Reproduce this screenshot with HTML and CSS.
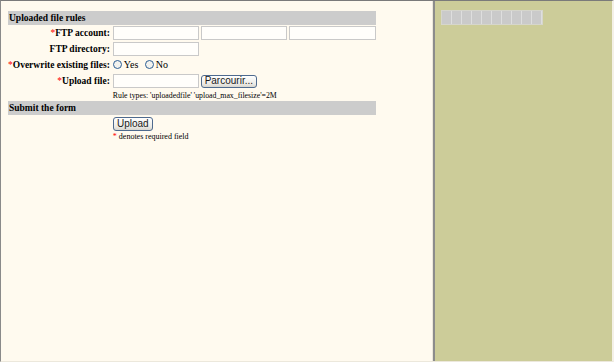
FILE: index.html
```html
<!DOCTYPE html>
<html lang="en">
<head>
    <meta charset="UTF-8">
    <title>Upload</title>
    <link rel="stylesheet" href="styles.css">
</head>
<body>
<div class="frames">
    <!--表单-->
    <div class="left">
        <table class="form-table">
            <tr class="header">
                <td colspan="2">Uploaded file rules</td>
            </tr>
            <tr>
                <td class="label"><span class="req">*</span>FTP account:</td>
                <td class="field">
                    <input type="text" class="txt"><input type="text" class="txt"><input type="text" class="txt last">
                </td>
            </tr>
            <tr>
                <td class="label">FTP directory:</td>
                <td class="field"><input type="text" class="txt"></td>
            </tr>
            <tr>
                <td class="label"><span class="req">*</span>Overwrite existing files:</td>
                <td class="field">
                    <label class="radio"><span class="dot"></span>Yes</label>
                    <label class="radio"><span class="dot"></span>No</label>
                </td>
            </tr>
            <tr>
                <td class="label"><span class="req">*</span>Upload file:</td>
                <td class="field">
                    <input type="text" class="txt"><button class="btn browse">Parcourir...</button>
                </td>
            </tr>
            <tr class="note-row">
                <td></td>
                <td class="rule">Rule types: 'uploadedfile' 'upload_max_filesize'=2M</td>
            </tr>
            <tr class="header">
                <td colspan="2">Submit the form</td>
            </tr>
            <tr class="submit-row">
                <td></td>
                <td class="field"><button class="btn upload">Upload</button></td>
            </tr>
            <tr>
                <td></td>
                <td class="legend"><span class="req">*</span> denotes required field</td>
            </tr>
        </table>
    </div>
    <!--右边-->
    <div class="right">
        <div class="boxes">
            <span></span><span></span><span></span><span></span><span></span>
            <span></span><span></span><span></span><span></span><span></span>
        </div>
    </div>
</div>
</body>
</html>
```

FILE: styles.css
```css
* {
    padding: 0;
    margin: 0;
    box-sizing: border-box;
}

html, body {
    height: 100%;
}

body {
    background: #f4f1e8;
    font-family: "Liberation Serif", "Times New Roman", serif;
    font-size: 9.5px;
    color: #000;
}

.frames {
    display: flex;
    height: 362px;
    border-top: 1px solid #7a7a7a;
    border-left: 1px solid #8a8a8a;
    border-bottom: 1px solid #ece8dc;
    border-right: 2px solid #f4f1e8;
}

.left {
    width: 434px;
    background: #fffaef;
    border-right: 2px solid #8c8c8c;
    box-shadow: inset -1px 0 0 #ebe7da;
    padding: 10px 0 0 7px;
}

.right {
    flex: 1;
    background: #cccc99;
    padding: 9px 0 0 6px;
}

.form-table {
    border-collapse: collapse;
    width: 368px;
}

.form-table td {
    padding: 0;
    vertical-align: middle;
    white-space: nowrap;
}

.header td {
    background: #cccccc;
    font-weight: bold;
    height: 14px;
    padding-left: 1px;
    line-height: 14px;
}

.label {
    width: 103px;
    text-align: right;
    font-weight: bold;
    padding-right: 3px !important;
    height: 16px;
}

.req {
    color: #ff0000;
    font-weight: normal;
}

.field {
    height: 16px;
}

.txt {
    width: 86px;
    height: 14px;
    border: 1px solid #c9c9c9;
    background: #fffefb;
    margin-right: 2px;
    vertical-align: middle;
}

.txt.last {
    width: 87px;
    margin-right: 0;
}

.radio {
    display: inline-flex;
    align-items: center;
    margin-right: 4px;
    font-family: "Liberation Serif", serif;
    font-size: 10px;
}

.dot {
    width: 9px;
    height: 9px;
    border: 1px solid #2c5e94;
    border-radius: 50%;
    background: #f2f2ee;
    margin-right: 2px;
}

.btn {
    font-family: "Liberation Sans", Arial, sans-serif;
    font-size: 10px;
    color: #1a1a1a;
    border: 1px solid #4e6a8e;
    border-radius: 3px;
    background: linear-gradient(#ffffff, #ecebe6 70%, #d8d6cf);
    vertical-align: middle;
    line-height: 10px;
}

.browse {
    width: 56px;
    height: 13px;
}

.note-row td {
    height: 12px;
}

.rule {
    font-size: 7.8px;
    vertical-align: top;
}

.submit-row td {
    height: 16px;
    padding-top: 1px !important;
}

.upload {
    width: 40px;
    height: 14px;
    font-size: 10px;
}

.legend {
    font-size: 8px;
    height: 10px;
}

.boxes {
    display: inline-flex;
    background: #d6d6cc;
    padding: 1px;
}

.boxes span {
    width: 10px;
    height: 13px;
    background: #cacaca;
    border-right: 1px solid #dedede;
}
```
